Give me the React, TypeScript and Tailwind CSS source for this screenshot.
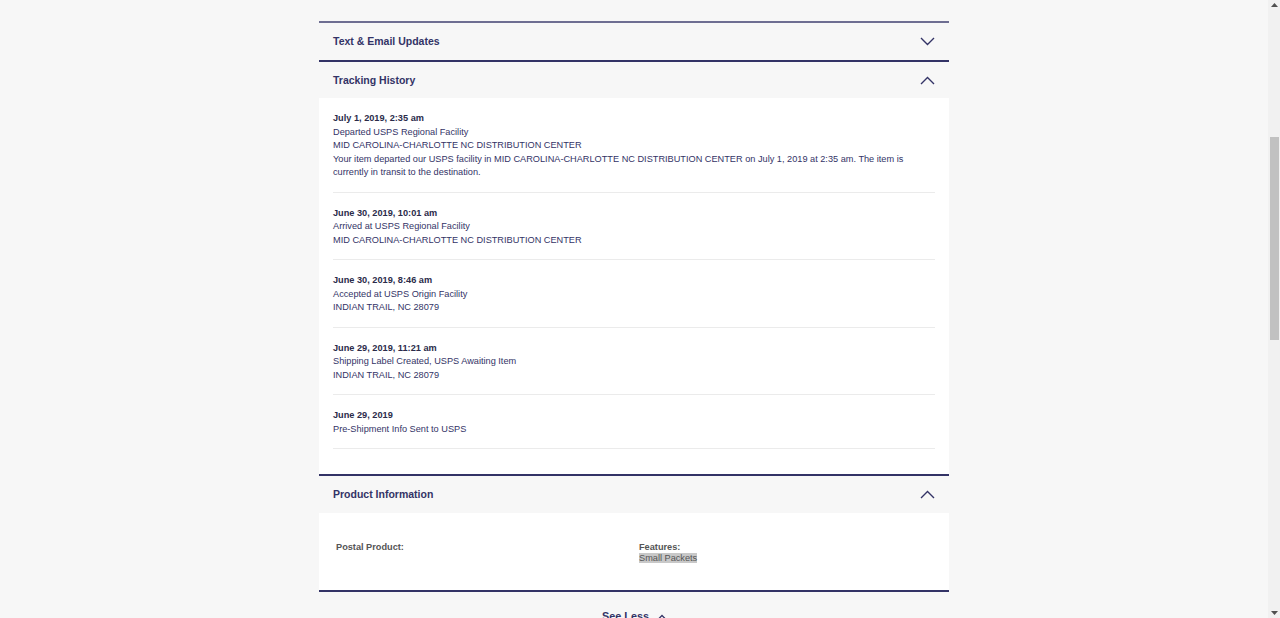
import React from "react";

const F = { fontFamily: '"Liberation Sans", Arial, Helvetica, sans-serif' };

function Chevron({ up }: { up?: boolean }) {
  return (
    <svg width="15" height="9" viewBox="0 0 15 9" className="shrink-0">
      <polyline
        points={up ? "1,8 7.5,1.5 14,8" : "1,1 7.5,7.5 14,1"}
        fill="none"
        stroke="#333366"
        strokeWidth="1.4"
      />
    </svg>
  );
}

type Entry = { date: string; lines: string[] };

const entries: Entry[] = [
  {
    date: "July 1, 2019, 2:35 am",
    lines: [
      "Departed USPS Regional Facility",
      "MID CAROLINA-CHARLOTTE NC DISTRIBUTION CENTER",
      "Your item departed our USPS facility in MID CAROLINA-CHARLOTTE NC DISTRIBUTION CENTER on July 1, 2019 at 2:35 am. The item is currently in transit to the destination.",
    ],
  },
  {
    date: "June 30, 2019, 10:01 am",
    lines: ["Arrived at USPS Regional Facility", "MID CAROLINA-CHARLOTTE NC DISTRIBUTION CENTER"],
  },
  {
    date: "June 30, 2019, 8:46 am",
    lines: ["Accepted at USPS Origin Facility", "INDIAN TRAIL, NC 28079"],
  },
  {
    date: "June 29, 2019, 11:21 am",
    lines: ["Shipping Label Created, USPS Awaiting Item", "INDIAN TRAIL, NC 28079"],
  },
  {
    date: "June 29, 2019",
    lines: ["Pre-Shipment Info Sent to USPS"],
  },
];

function Header({ title, up, h }: { title: string; up?: boolean; h: string }) {
  return (
    <div className={`flex items-center justify-between pl-[14px] pr-[14px] ${h}`}>
      <span className="text-[10.5px] font-bold leading-none text-[#333366]">{title}</span>
      <Chevron up={up} />
    </div>
  );
}

export default function App() {
  return (
    <div className="flex h-[618px] w-full overflow-hidden bg-[#f7f7f7]" style={F}>
      <main className="min-w-0 flex-1 pt-[21px]">
        <div className="mx-auto w-[630px]">
          <section className="border-t-2 border-[#6e6e92]">
            <Header title="Text & Email Updates" h="h-[37px]" />
          </section>

          <section className="border-t-2 border-[#333366]">
            <Header title="Tracking History" up h="h-[36px]" />
            <div className="bg-white px-[14px] pb-[25px]">
              {entries.map((e, i) => (
                <div key={i} className="border-b border-[#ebebeb] pt-[14px] pb-[12px] text-[9.2px] leading-[13.5px] text-[#333366]">
                  <div className="font-bold text-[#2b2b4a]">{e.date}</div>
                  {e.lines.map((l, j) => (
                    <div key={j} className="pr-[22px]">{l}</div>
                  ))}
                </div>
              ))}
            </div>
          </section>

          <section className="border-t-2 border-[#333366]">
            <Header title="Product Information" up h="h-[37px]" />
            <div className="grid grid-cols-[303px_1fr] bg-white pl-[17px] pt-[29px] pb-[26px] text-[9.2px] leading-[11px]">
              <div className="font-bold text-[#555555]">Postal Product:</div>
              <div>
                <div className="font-bold text-[#555555]">Features:</div>
                <div>
                  <span className="bg-[#c8c8c8] text-[#555555]">Small Packets</span>
                </div>
              </div>
            </div>
          </section>

          <section className="border-t-2 border-[#333366] pt-[18px]">
            <div className="flex items-center justify-center gap-[9px]">
              <span className="text-[10.8px] font-bold leading-[12px] text-[#333366]">See Less</span>
              <svg width="8" height="5" viewBox="0 0 8 5">
                <polyline points="1,4.5 4,1.5 7,4.5" fill="none" stroke="#333366" strokeWidth="1.3" />
              </svg>
            </div>
          </section>
        </div>
      </main>

      <aside className="flex w-[12px] shrink-0 flex-col items-center bg-[#f1f1f1]">
        <div className="flex h-[10px] items-center justify-center">
          <svg width="7" height="4" viewBox="0 0 7 4">
            <polygon points="0,4 3.5,0 7,4" fill="#505050" />
          </svg>
        </div>
        <div className="mt-[127px] h-[203px] w-[9px] bg-[#c1c1c1]" />
        <div className="flex-1" />
        <div className="flex h-[10px] items-center justify-center">
          <svg width="7" height="4" viewBox="0 0 7 4">
            <polygon points="0,0 7,0 3.5,4" fill="#505050" />
          </svg>
        </div>
      </aside>
    </div>
  );
}
